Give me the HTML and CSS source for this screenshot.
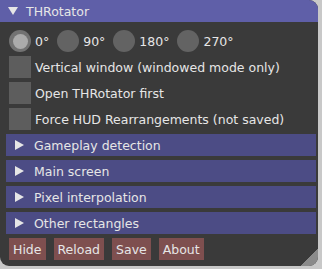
FILE: index.html
```html
<!DOCTYPE html>
<html>
<head>
<meta charset="utf-8">
<link rel="stylesheet" href="styles.css">
</head>
<body>
<div class="win">
  <div class="title">
    <svg class="tri" width="10" height="8" viewBox="0 0 10 8"><polygon points="0,0 10,0 5,8" fill="#e6e6e6"/></svg>
    <span class="title-text">THRotator</span>
  </div>
  <div class="content">
    <div class="row radios">
      <label class="radio-item"><span class="radio on"><span class="dot"></span></span><span>0°</span></label>
      <label class="radio-item"><span class="radio"></span><span>90°</span></label>
      <label class="radio-item"><span class="radio"></span><span>180°</span></label>
      <label class="radio-item"><span class="radio"></span><span>270°</span></label>
    </div>
    <div class="row check"><span class="box"></span><span>Vertical window (windowed mode only)</span></div>
    <div class="row check"><span class="box"></span><span>Open THRotator first</span></div>
    <div class="row check"><span class="box"></span><span>Force HUD Rearrangements (not saved)</span></div>
    <div class="header"><svg class="htri" width="9" height="10" viewBox="0 0 9 10"><polygon points="0,0 9,5 0,10" fill="#e6e6e6"/></svg><span>Gameplay detection</span></div>
    <div class="header"><svg class="htri" width="9" height="10" viewBox="0 0 9 10"><polygon points="0,0 9,5 0,10" fill="#e6e6e6"/></svg><span>Main screen</span></div>
    <div class="header"><svg class="htri" width="9" height="10" viewBox="0 0 9 10"><polygon points="0,0 9,5 0,10" fill="#e6e6e6"/></svg><span>Pixel interpolation</span></div>
    <div class="header"><svg class="htri" width="9" height="10" viewBox="0 0 9 10"><polygon points="0,0 9,5 0,10" fill="#e6e6e6"/></svg><span>Other rectangles</span></div>
    <div class="row buttons">
      <span class="btn">Hide</span>
      <span class="btn">Reload</span>
      <span class="btn">Save</span>
      <span class="btn">About</span>
    </div>
  </div>
  <div class="grip"></div>
</div>
</body>
</html>
```
FILE: styles.css
```css
html, body {
  margin: 0;
  padding: 0;
  background: #c8c8c8;
  width: 322px;
  height: 269px;
  overflow: hidden;
}
.win {
  position: relative;
  width: 318px;
  height: 266px;
  background: #3a3a3a;
  border-radius: 0 9px 9px 9px;
  overflow: hidden;
  font-family: "DejaVu Sans", sans-serif;
  font-size: 12.5px;
  color: #e6e6e6;
}
.title {
  height: 22px;
  background: #5f5fa8;
  display: flex;
  align-items: center;
  padding-left: 8px;
}
.tri { margin-right: 8px; }
.content {
  display: flex;
  flex-direction: column;
  gap: 4px;
  padding: 8px 0 0 9px;
}
.row {
  height: 22px;
  display: flex;
  align-items: center;
}
.radios { gap: 8px; }
.radio-item {
  display: flex;
  align-items: center;
  gap: 4px;
}
.radio {
  width: 22px;
  height: 22px;
  border-radius: 50%;
  background: #636363;
  display: flex;
  align-items: center;
  justify-content: center;
}
.radio.on { background: #727272; }
.dot {
  width: 15px;
  height: 15px;
  border-radius: 50%;
  background: #ababab;
}
.check { gap: 4px; }
.box {
  width: 22px;
  height: 22px;
  background: #5d5d5d;
}
.header {
  height: 22px;
  width: 310px;
  margin-left: -3px;
  background: #4c4c85;
  display: flex;
  align-items: center;
}
.htri { margin-left: 9px; margin-right: 10px; }
.buttons { gap: 8px; }
.btn {
  height: 22px;
  padding: 0 4px;
  background: #7e4f4f;
  display: flex;
  align-items: center;
}
.grip {
  position: absolute;
  right: 0;
  bottom: 0;
  width: 17px;
  height: 17px;
  background: linear-gradient(135deg, transparent 50%, #8a8a8a 50%);
}
```
